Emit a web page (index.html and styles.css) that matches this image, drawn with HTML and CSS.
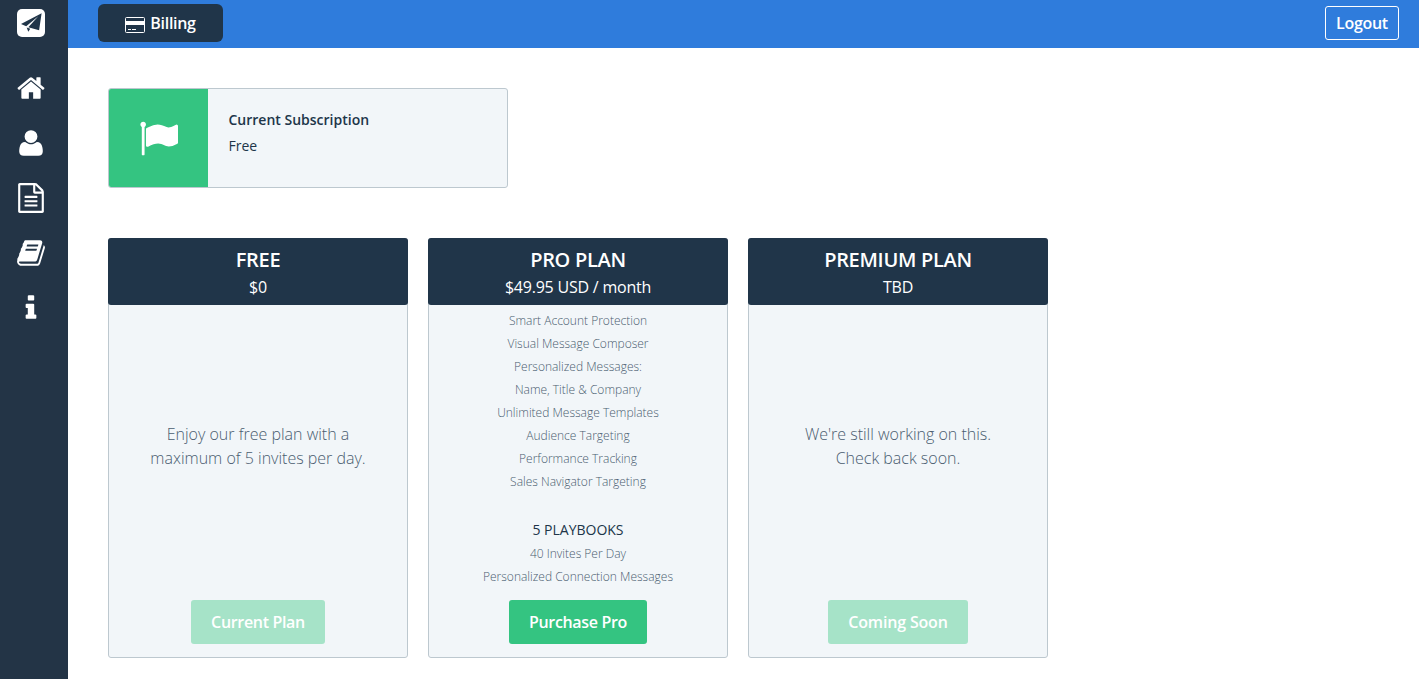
FILE: index.html
```html
<!DOCTYPE html>
<html lang="en">
<head>
<meta charset="utf-8">
<title>Billing</title>
<link rel="stylesheet" href="styles.css">
</head>
<body>
<div class="app">
  <nav class="sidebar">
    <a class="logo"><svg width="28" height="28" viewBox="0 0 28 28"><rect width="28" height="28" rx="5" fill="#fff"/><path d="M24.6 4.2 4 15l5.2 2.3L21.3 7.2 11.3 18.3l10.8 2.9z" fill="#203549"/><path d="M9.7 18.6l3.6 1.2-2 3z" fill="#203549"/></svg></a>
    <a class="nav-icon"><svg viewBox="0 0 1792 1792"><path d="M1472 992v480q0 26-19 45t-45 19h-384v-384h-256v384h-384q-26 0-45-19t-19-45v-480q0-1 .5-3t.5-3l575-474 575 474q1 2 1 6zm223-69l-62 74q-8 9-21 11h-3q-13 0-21-7l-692-577-692 577q-12 8-24 7-13-2-21-11l-62-74q-8-10-7-23.5t11-21.5l719-599q32-26 76-26t76 26l244 204v-195q0-14 9-23t23-9h192q14 0 23 9t9 23v408l219 182q10 8 11 21.5t-7 23.5z"/></svg></a>
    <a class="nav-icon"><svg viewBox="0 0 1792 1792"><path d="M1600 1405q0 120-73 189.5t-194 69.5h-874q-121 0-194-69.5t-73-189.5q0-53 3.5-103.5t14-109 26.5-108.5 43-97.5 62-81 85.5-53.5 111.5-20q9 0 42 21.5t74.5 48 108 48 133.5 21.5 133.5-21.5 108-48 74.5-48 42-21.5q61 0 111.5 20t85.5 53.5 62 81 43 97.5 26.5 108.5 14 109 3.5 103.5zm-320-893q0 159-112.5 271.5t-271.5 112.5-271.5-112.5-112.5-271.5 112.5-271.5 271.5-112.5 271.5 112.5 112.5 271.5z"/></svg></a>
    <a class="nav-icon"><svg viewBox="0 0 1792 1792"><path d="M1596 380q28 28 48 76t20 88v1152q0 40-28 68t-68 28h-1344q-40 0-68-28t-28-68v-1600q0-40 28-68t68-28h896q40 0 88 20t76 48zm-444-244v376h376q-10-29-22-41l-313-313q-12-12-41-22zm384 1528v-1024h-416q-40 0-68-28t-28-68v-416h-768v1536h1280zm-1024-864q0-14 9-23t23-9h704q14 0 23 9t9 23v64q0 14-9 23t-23 9h-704q-14 0-23-9t-9-23v-64zm736 224q14 0 23 9t9 23v64q0 14-9 23t-23 9h-704q-14 0-23-9t-9-23v-64q0-14 9-23t23-9h704zm0 256q14 0 23 9t9 23v64q0 14-9 23t-23 9h-704q-14 0-23-9t-9-23v-64q0-14 9-23t23-9h704z"/></svg></a>
    <a class="nav-icon"><svg viewBox="0 0 1792 1792"><path d="M1703 478q40 57 18 129l-275 906q-19 64-76.5 107.5t-122.5 43.5h-923q-77 0-148.5-53.5t-99.5-131.5q-24-67-2-127 0-4 3-27t4-37q1-8-3-21.5t-3-19.5q2-11 8-21t16.5-23.5 16.5-23.5q23-38 45-91.5t30-91.5q3-10 .5-30t-.5-28q3-11 17-28t17-23q21-36 42-92t25-90q1-9-2.5-32t.5-28q4-13 22-30.5t22-22.5q19-26 42.5-84.5t27.5-96.5q1-8-3-25.5t-2-26.5q2-8 9-18t18-23 17-21q8-12 16.5-30.5t15-35 16-36 19.5-32 26.5-23.5 36-11.5 47.5 5.5l-1 3q38-9 51-9h761q74 0 114 56t18 130l-274 906q-36 119-71.5 153.5t-128.5 34.5h-869q-27 0-38 15-11 16-1 43 24 70 144 70h923q29 0 56-15.5t35-41.5l300-987q7-22 5-57 38 15 59 43zm-1064 2q-4 13 2 22.5t20 9.5h608q13 0 25.5-9.5t16.5-22.5l21-64q4-13-2-22.5t-20-9.5h-608q-13 0-25.5 9.5t-16.5 22.5zm-83 256q-4 13 2 22.5t20 9.5h608q13 0 25.5-9.5t16.5-22.5l21-64q4-13-2-22.5t-20-9.5h-608q-13 0-25.5 9.5t-16.5 22.5z"/></svg></a>
    <a class="nav-icon"><svg viewBox="0 0 1792 1792"><path d="M1216 1344v128q0 26-19 45t-45 19h-512q-26 0-45-19t-19-45v-128q0-26 19-45t45-19h64v-384h-64q-26 0-45-19t-19-45v-128q0-26 19-45t45-19h384q26 0 45 19t19 45v576h64q26 0 45 19t19 45zm-128-1152v192q0 26-19 45t-45 19h-256q-26 0-45-19t-19-45v-192q0-26 19-45t45-19h256q26 0 45 19t19 45z"/></svg></a>
  </nav>
  <div class="main">
    <header class="topbar">
      <a class="tab"><svg width="20" height="16" viewBox="0 0 20 16"><rect x=".5" y=".5" width="19" height="15" rx="1" fill="none" stroke="#fff"/><path d="M1 4h18v4H1zM3 12h3v1H3zM7 12h4v1H7z" fill="#fff"/></svg><span>Billing</span></a>
      <a class="logout">Logout</a>
    </header>
    <main class="content">
      <section class="subscription">
        <div class="flag"><svg width="39" height="39" viewBox="0 0 1792 1792"><path d="M320 256q0 72-64 110v1266q0 13-9.5 22.5t-22.5 9.5h-64q-13 0-22.5-9.5t-9.5-22.5v-1266q-64-38-64-110 0-53 37.5-90.5t90.5-37.5 90.5 37.5 37.5 90.5zm1472 64v763q0 25-12.5 38.5t-39.5 27.5q-215 116-369 116-61 0-123.5-22t-108.5-48-115.5-48-142.5-22q-192 0-464 146-17 9-33 9-26 0-45-19t-19-45v-742q0-32 31-55 21-14 79-43 236-120 421-120 107 0 200 29t219 88q38 19 88 19 54 0 117.5-21t110-47 88-47 54.5-21q26 0 45 19t19 45z"/></svg></div>
        <div class="sub-info">
          <div class="sub-title">Current Subscription</div>
          <div>Free</div>
        </div>
      </section>
      <section class="plans">
        <article class="plan">
          <header class="plan-head"><h2>FREE</h2><p>$0</p></header>
          <div class="blurb">Enjoy our free plan with a<br>maximum of 5 invites per day.</div>
          <button class="btn disabled">Current Plan</button>
        </article>
        <article class="plan">
          <header class="plan-head"><h2>PRO PLAN</h2><p>$49.95 USD / month</p></header>
          <ul class="features">
            <li>Smart Account Protection</li>
            <li>Visual Message Composer</li>
            <li>Personalized Messages:</li>
            <li>Name, Title &amp; Company</li>
            <li>Unlimited Message Templates</li>
            <li>Audience Targeting</li>
            <li>Performance Tracking</li>
            <li>Sales Navigator Targeting</li>
            <li class="playbooks">5 PLAYBOOKS</li>
            <li>40 Invites Per Day</li>
            <li>Personalized Connection Messages</li>
          </ul>
          <button class="btn">Purchase Pro</button>
        </article>
        <article class="plan">
          <header class="plan-head"><h2>PREMIUM PLAN</h2><p>TBD</p></header>
          <div class="blurb">We're still working on this.<br>Check back soon.</div>
          <button class="btn disabled soon">Coming Soon</button>
        </article>
      </section>
    </main>
  </div>
</div>
</body>
</html>
```
FILE: styles.css
```css
* { box-sizing: border-box; }
body { margin: 0; background: #fff; color: #203549; font-family: "Open Sans", sans-serif; }
.app { display: flex; height: 679px; }
.sidebar { width: 68px; background: #233446; padding: 9px 6px 0 0; display: flex; flex-direction: column; align-items: center; gap: 25px; }
.logo { height: 28px; margin-bottom: 11px; }
.logo svg, .nav-icon svg { display: block; }
.nav-icon { width: 30px; height: 30px; }
.nav-icon svg { width: 30px; height: 30px; fill: #fff; }
.main { flex: 1; }
.topbar { height: 48px; background: #2f7cdc; display: flex; justify-content: space-between; align-items: flex-start; padding: 4px 20px 0 30px; color: #fff; font-size: 16px; font-weight: 600; letter-spacing: -0.3px; }
.tab { width: 125px; height: 38px; border-radius: 6px; background: #203549; display: flex; align-items: center; justify-content: center; gap: 5px; }
.tab svg { margin-top: 4px; }
.logout { width: 74px; height: 34px; margin-top: 2px; border: 1px solid #fff; border-radius: 3px; text-align: center; line-height: 33px; }
.content { padding: 40px; }
.subscription { width: 400px; height: 100px; border: 1px solid #bdc8cf; border-radius: 3px; background: #f2f6f9; display: flex; font-size: 14px; line-height: 26px; overflow: hidden; }
.flag { width: 99px; background: #34c481; display: flex; align-items: center; justify-content: center; }
.flag svg { fill: #fff; }
.sub-info { padding: 18px 20.5px; }
.sub-title { font-weight: 600; }
.plans { display: flex; gap: 20px; margin-top: 50px; }
.plan { width: 300px; height: 420px; border: 1px solid #bdc8cf; border-radius: 3px; background: #f2f6f9; text-align: center; display: flex; flex-direction: column; align-items: center; }
.plan-head { width: 300px; height: 67px; margin-top: -1px; padding-top: 7px; flex: none; border-radius: 3px; background: #203549; color: #fff; }
.plan-head h2 { margin: 0; font-size: 20px; line-height: 29px; font-weight: 600; letter-spacing: -0.3px; }
.plan-head p { margin: 0; font-size: 16px; line-height: 26px; letter-spacing: -0.22px; }
.blurb { flex: 1; padding-top: 117px; font-size: 16px; line-height: 24px; font-weight: 300; color: #4a5d70; }
.features { flex: 1; list-style: none; margin: 0; padding: 4px 0 0; font-size: 12px; line-height: 23px; font-weight: 300; color: #4a5d70; }
.features .playbooks { margin-top: 24px; font-size: 14px; line-height: 25px; font-weight: 400; color: #203549; }
.btn { height: 44px; margin-bottom: 13px; padding: 0 20px; border: 0; border-radius: 3px; background: #34c481; color: #fff; font: 600 16px "Open Sans", sans-serif; letter-spacing: -0.33px; }
.btn.disabled { background: #a6e3c8; }
.btn.soon { letter-spacing: -0.18px; }
```
